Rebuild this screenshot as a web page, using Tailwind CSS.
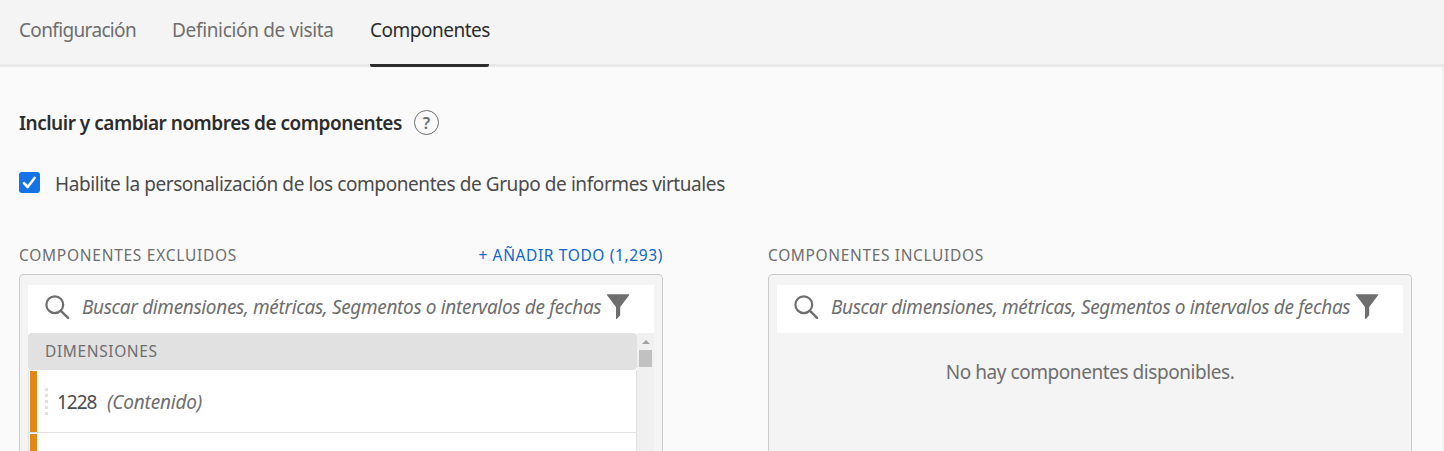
<!DOCTYPE html>
<html lang="es">
<head>
<meta charset="utf-8">
<title>Componentes</title>
<script src="https://cdn.jsdelivr.net/npm/@tailwindcss/browser@4"></script>
</head>
<body class="flex h-[451px] w-[1444px] flex-col overflow-hidden whitespace-nowrap bg-[#fafafa] font-['Noto_Sans',sans-serif] text-[19px] text-[#6e6e6e]">
<nav class="flex h-[67px] shrink-0 border-b-3 border-[#e9e9e9] bg-[#f4f4f4] pl-[19px]">
  <a class="w-[153px] leading-[61px] tracking-[-0.65px]">Configuración</a>
  <a class="w-[198px] leading-[61px] tracking-[-0.33px]">Definición de visita</a>
  <a class="h-[67px] w-[119px] rounded-b-[2px] border-b-3 border-[#2c2c2c] leading-[61px] tracking-[-0.5px] text-[#2c2c2c]">Componentes</a>
</nav>
<main class="flex min-h-0 flex-1 flex-col border-r-2 border-[#f4f4f4] pl-[19px]">
  <div class="mt-[43px] flex h-[25px] shrink-0 items-center">
    <h1 class="w-[395px] text-[19px] font-semibold leading-[26px] tracking-[-0.49px] text-[#2c2c2c]">Incluir y cambiar nombres de componentes</h1>
    <span class="flex size-[25px] items-center justify-center rounded-full border-[1.5px] border-[#6e6e6e] text-[16px] font-semibold leading-none">?</span>
  </div>
  <label class="mt-[37px] flex h-[21px] shrink-0 items-center">
    <span class="flex size-[21px] items-center justify-center rounded-[3px] bg-[#1473e6]">
      <svg class="size-[21px]" viewBox="0 0 21 21" fill="none" stroke="#fff" stroke-width="2.6" stroke-linecap="round" stroke-linejoin="round"><path d="M5 11.2 8.6 15 15.6 6"/></svg>
    </span>
    <span class="ml-[15px] mt-[3px] leading-[24px] tracking-[-0.415px] text-[#4b4b4b]">Habilite la personalización de los componentes de Grupo de informes virtuales</span>
  </label>
  <div class="mt-[52px] flex min-h-0 flex-1 gap-[105px]">
    <section class="flex w-[644px] flex-col">
      <div class="flex h-[29px] shrink-0 justify-between text-[15.5px] leading-5">
        <h2 class="tracking-[0.73px]">COMPONENTES EXCLUIDOS</h2>
        <a class="tracking-[0.62px] text-[#0d66d0]">+ AÑADIR TODO (1,293)</a>
      </div>
      <div class="flex min-h-0 flex-1 flex-col rounded-t-[5px] border border-b-0 border-[#cacaca] bg-[#f4f4f4] px-2 pt-[10px]">
        <div class="flex h-12 shrink-0 bg-white pl-[17px]">
          <svg class="mt-[9px] h-[27px] w-[26px]" viewBox="0 0 26 27" fill="none" stroke="#6e6e6e" stroke-width="2.2"><circle cx="9.8" cy="10.7" r="8.4"/><path d="m15.9 16.9 7.2 7" stroke-width="2.5" stroke-linecap="round"/></svg>
          <span class="ml-[11px] w-[524px] italic leading-[45px] tracking-[-0.34px]">Buscar dimensiones, métricas, Segmentos o intervalos de fechas</span>
          <svg class="mt-[9px] h-[26px] w-[24px]" viewBox="0 0 24 26" fill="#6e6e6e"><path d="M1.5.2h21.2c.6 0 .8.6.4 1L14.2 13v8.2l-3.2 3.6c-.4.4-1 .2-1-.4V13L1.1 1.2C.7.8.9.2 1.5.2Z"/></svg>
        </div>
        <div class="flex min-h-0 flex-1">
          <div class="flex w-[609px] flex-col bg-white">
            <h3 class="h-[37px] shrink-0 rounded-[4px] bg-[#e1e1e1] pl-[17px] text-[15.5px] leading-[37px] tracking-[0.62px]">DIMENSIONES</h3>
            <div class="flex h-[63px] shrink-0 items-center border border-t-0 border-[#e1e1e1] pl-px">
              <i class="h-[61px] w-[7px] self-end bg-[#e68619]"></i>
              <svg class="ml-2 h-[27px] w-[3px]" viewBox="0 0 3 27" fill="#e1e1e1"><path d="M0 0h3v3H0zM0 6h3v3H0zM0 12h3v3H0zM0 18h3v3H0zM0 24h3v3H0z"/></svg>
              <span class="ml-[9px] mt-[2px] w-[50px] tracking-[-1px] text-[#4b4b4b]">1228</span>
              <span class="mt-[2px] italic tracking-[-0.2px]">(Contenido)</span>
            </div>
            <div class="flex min-h-0 flex-1 border-x border-[#e1e1e1] pl-px pt-px"><i class="w-[7px] bg-[#e68619]"></i></div>
          </div>
          <div class="flex w-[17px] flex-col items-center bg-[#f0f0f0] pt-[7px]">
            <svg class="h-[4px] w-[8px]" viewBox="0 0 8 4" fill="#a3a3a3"><path d="M0 4 4 0l4 4z"/></svg>
            <i class="mt-[6px] h-[17px] w-[13px] bg-[#c1c1c1]"></i>
          </div>
        </div>
      </div>
    </section>
    <section class="flex w-[644px] flex-col">
      <h2 class="h-[29px] shrink-0 text-[15.5px] leading-5 tracking-[0.64px]">COMPONENTES INCLUIDOS</h2>
      <div class="flex min-h-0 flex-1 flex-col rounded-t-[5px] border border-b-0 border-[#cacaca] bg-[#f4f4f4] px-2 pt-[10px]">
        <div class="flex h-12 shrink-0 bg-white pl-[17px]">
          <svg class="mt-[9px] h-[27px] w-[26px]" viewBox="0 0 26 27" fill="none" stroke="#6e6e6e" stroke-width="2.2"><circle cx="9.8" cy="10.7" r="8.4"/><path d="m15.9 16.9 7.2 7" stroke-width="2.5" stroke-linecap="round"/></svg>
          <span class="ml-[11px] w-[524px] italic leading-[45px] tracking-[-0.34px]">Buscar dimensiones, métricas, Segmentos o intervalos de fechas</span>
          <svg class="mt-[9px] h-[26px] w-[24px]" viewBox="0 0 24 26" fill="#6e6e6e"><path d="M1.5.2h21.2c.6 0 .8.6.4 1L14.2 13v8.2l-3.2 3.6c-.4.4-1 .2-1-.4V13L1.1 1.2C.7.8.9.2 1.5.2Z"/></svg>
        </div>
        <p class="mt-[27px] text-center leading-6 tracking-[-0.44px]">No hay componentes disponibles.</p>
      </div>
    </section>
  </div>
</main>
</body>
</html>
